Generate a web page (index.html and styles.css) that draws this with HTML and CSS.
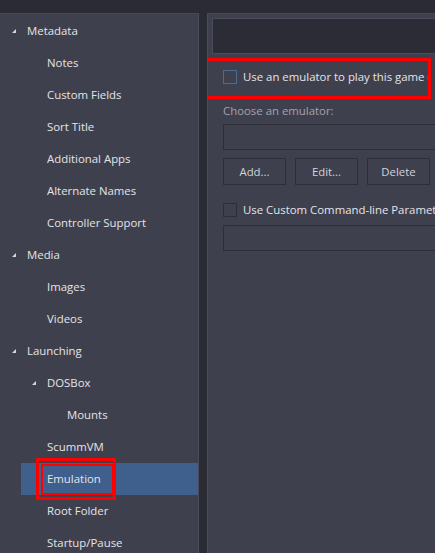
FILE: index.html
```html
<!DOCTYPE html>
<html>
<head>
<meta charset="utf-8">
<link rel="stylesheet" href="styles.css">
</head>
<body>
<div class="window">
  <div class="tree">
    <div class="row l0"><span class="tog"><span class="tri"></span></span><span class="lbl">Metadata</span></div>
    <div class="row l1"><span class="tog"></span><span class="lbl">Notes</span></div>
    <div class="row l1"><span class="tog"></span><span class="lbl">Custom Fields</span></div>
    <div class="row l1"><span class="tog"></span><span class="lbl">Sort Title</span></div>
    <div class="row l1"><span class="tog"></span><span class="lbl">Additional Apps</span></div>
    <div class="row l1"><span class="tog"></span><span class="lbl">Alternate Names</span></div>
    <div class="row l1"><span class="tog"></span><span class="lbl">Controller Support</span></div>
    <div class="row l0"><span class="tog"><span class="tri"></span></span><span class="lbl">Media</span></div>
    <div class="row l1"><span class="tog"></span><span class="lbl">Images</span></div>
    <div class="row l1"><span class="tog"></span><span class="lbl">Videos</span></div>
    <div class="row l0"><span class="tog"><span class="tri"></span></span><span class="lbl">Launching</span></div>
    <div class="row l1"><span class="tog"><span class="tri"></span></span><span class="lbl">DOSBox</span></div>
    <div class="row l2"><span class="tog"></span><span class="lbl">Mounts</span></div>
    <div class="row l1"><span class="tog"></span><span class="lbl">ScummVM</span></div>
    <div class="row l1 selected"><span class="tog"></span><span class="lbl">Emulation</span>
      <span class="mark mark-outer"></span><span class="mark mark-inner"></span></div>
    <div class="row l1"><span class="tog"></span><span class="lbl">Root Folder</span></div>
    <div class="row l1"><span class="tog"></span><span class="lbl">Startup/Pause</span></div>
  </div>
  <div class="content">
    <div class="header-box"></div>
    <div class="form">
      <div class="check-row first">
        <span class="box blue"></span>
        <span class="check-label clip">Use an emulator to play this game (please)</span>
        <span class="mark mark-main"></span>
      </div>
      <div class="caption">Choose an emulator:</div>
      <div class="field"></div>
      <div class="buttons">
        <div class="btn">Add...</div>
        <div class="btn">Edit...</div>
        <div class="btn">Delete</div>
      </div>
      <div class="check-row second">
        <span class="box"></span>
        <span class="check-label">Use Custom Command-line Parameters</span>
      </div>
      <div class="field"></div>
    </div>
  </div>
</div>
</body>
</html>
```
FILE: styles.css
```css
html, body {
  margin: 0;
  padding: 0;
}
body {
  background: #2b2b36;
  width: 435px;
  height: 553px;
  overflow: hidden;
  font-family: "Open Sans", "Noto Sans", sans-serif;
  font-size: 11.4px;
  color: #e4e4e8;
}
.window {
  display: flex;
  gap: 8px;
  padding-top: 13px;
  height: 540px;
}
.tree {
  width: 199px;
  flex: none;
  background: #3f404d;
  border-right: 1px solid #4b4c5b;
  border-top: 1px solid #464755;
  padding-top: 1px;
  box-sizing: border-box;
  overflow: hidden;
}
.row {
  position: relative;
  height: 32px;
  display: flex;
  align-items: center;
}
.row.l0 { margin-left: 1px; }
.row.l1 { margin-left: 21px; }
.row.l2 { margin-left: 41px; }
.row.selected { background: #3f5f8d; }
.tog {
  width: 26px;
  flex: none;
  position: relative;
  height: 32px;
}
.tri {
  position: absolute;
  left: 11px;
  top: 14px;
  width: 0;
  height: 0;
  border-left: 4px solid transparent;
  border-bottom: 4px solid #d8d8dc;
}
.lbl {
  white-space: nowrap;
  padding-bottom: 1px;
}
.mark {
  position: absolute;
  border: 3px solid #ff0000;
  box-sizing: border-box;
  pointer-events: none;
}
.mark-outer {
  left: 15px;
  top: -5px;
  width: 80px;
  height: 42px;
}
.mark-inner {
  left: 20px;
  top: 1px;
  width: 73px;
  height: 31px;
  border-width: 2px;
}
.content {
  flex: 1;
  background: #3f404d;
  border-left: 1px solid #4b4c5b;
  border-top: 1px solid #464755;
  padding: 4px 0 0 4px;
  overflow: hidden;
  min-width: 0;
}
.header-box {
  height: 36px;
  background: #2c2c37;
  border: 1px solid #4b4c5b;
  border-right: none;
  box-sizing: border-box;
  width: 300px;
}
.form {
  padding-left: 11px;
  width: 300px;
}
.check-row {
  position: relative;
  display: flex;
  align-items: center;
  gap: 6px;
  height: 14px;
}
.check-row.first { margin-top: 16px; }
.check-row.second { margin-top: 18px; }
.box {
  width: 14px;
  height: 14px;
  box-sizing: border-box;
  border: 1px solid #2e2e39;
  flex: none;
}
.box.blue { border-color: #4d6a96; }
.check-label {
  white-space: nowrap;
  line-height: 14px;
}
.check-label.clip {
  width: 186px;
  overflow: hidden;
}
.mark-main {
  left: -19px;
  top: -12px;
  width: 227px;
  height: 41px;
}
.caption {
  margin-top: 19px;
  color: #a3a3ad;
  line-height: 16px;
}
.field {
  margin-top: 5px;
  height: 26px;
  border: 1px solid #2e2e39;
  border-right: none;
  box-sizing: border-box;
}
.buttons {
  display: flex;
  gap: 9px;
  margin-top: 8px;
}
.btn {
  width: 63px;
  height: 27px;
  box-sizing: border-box;
  border: 1px solid #2e2e39;
  display: flex;
  align-items: center;
  justify-content: center;
  color: #d2d2d8;
}
.second + .field { margin-top: 8px; }
```
